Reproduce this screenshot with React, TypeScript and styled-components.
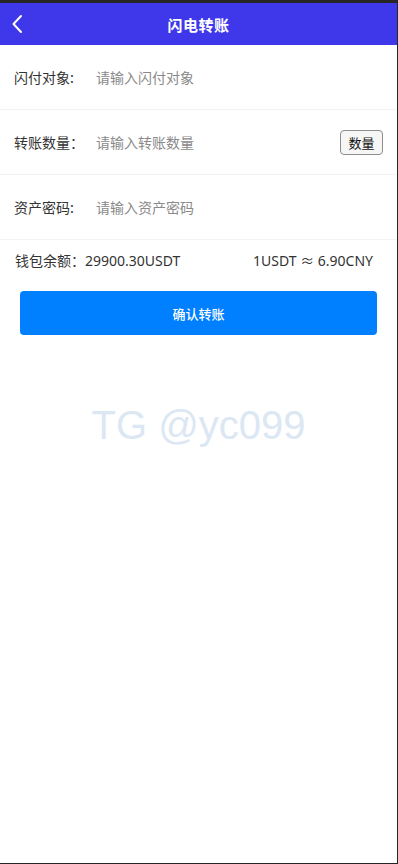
import styled, { createGlobalStyle } from 'styled-components'

const GlobalStyle = createGlobalStyle`
  html, body {
    margin: 0;
    padding: 0;
    background: #fff;
  }
  * {
    box-sizing: border-box;
  }
  body {
    font-family: "Noto Sans CJK SC", "Noto Sans", sans-serif;
  }
`

const Page = styled.div`
  height: 864px;
  border-top: 3px solid #262626;
  border-right: 1px solid #262626;
  border-bottom: 1px solid #262626;
  display: flex;
  flex-direction: column;
  background: #fff;
`

const Header = styled.header`
  height: 42px;
  background: #3e38ea;
  display: flex;
  align-items: center;
  justify-content: center;
  position: relative;
  color: #fff;
`

const BackButton = styled.div`
  position: absolute;
  left: 11px;
  top: 10px;
  width: 16px;
  height: 22px;
  display: flex;
  align-items: center;
`

const Title = styled.h1`
  margin: 0;
  font-size: 15px;
  font-weight: 700;
  letter-spacing: 0.5px;
`

const Form = styled.div`
  display: flex;
  flex-direction: column;
`

const Row = styled.div`
  height: 65px;
  display: flex;
  align-items: center;
  padding: 0 14px;
  border-bottom: 1px solid #f3f3f3;
`

const Label = styled.label`
  width: 82px;
  font-size: 14px;
  color: #333;
  flex-shrink: 0;
`

const Input = styled.input`
  flex: 1;
  border: none;
  outline: none;
  font-family: inherit;
  font-size: 14px;
  color: #333;
  padding: 0;
  background: transparent;

  &::placeholder {
    color: #8a8a8a;
  }
`

const SmallButton = styled.button`
  width: 43px;
  height: 25px;
  border: 1px solid #8e8e8e;
  border-radius: 4px;
  background: #f6f6f6;
  font-family: inherit;
  font-size: 13px;
  color: #111;
  padding: 0;
  flex-shrink: 0;
`

const BalanceLine = styled.div`
  display: flex;
  justify-content: space-between;
  align-items: center;
  padding: 0 24px 0 15px;
  height: 40px;
  font-family: "Noto Sans", "Noto Sans CJK SC", sans-serif;
  font-size: 14px;
  color: #333;
`

const Submit = styled.button`
  margin: 11px 20px 0 20px;
  height: 44px;
  border: none;
  border-radius: 4px;
  background: #0080ff;
  color: #fff;
  font-family: inherit;
  font-size: 13px;
  font-weight: 500;
`

const Watermark = styled.div`
  margin-top: 68px;
  text-align: center;
  font-family: "Liberation Sans", Arial, sans-serif;
  font-size: 40px;
  color: #dce7f4;
`

const rows = [
  { label: '闪付对象:', placeholder: '请输入闪付对象' },
  { label: '转账数量：', placeholder: '请输入转账数量', action: '数量' },
  { label: '资产密码:', placeholder: '请输入资产密码', type: 'password' }
]

export default function App() {
  return (
    <>
      <GlobalStyle />
      <Page>
        <Header>
          <BackButton>
            <svg width="12" height="20" viewBox="0 0 12 20">
              <path d="M10 2 L2.5 10 L10 18" fill="none" stroke="#fff" strokeWidth="2" strokeLinecap="round" strokeLinejoin="round" />
            </svg>
          </BackButton>
          <Title>闪电转账</Title>
        </Header>
        <Form>
          {rows.map((row, i) => (
            <Row key={i}>
              <Label>{row.label}</Label>
              <Input placeholder={row.placeholder} type={row.type || 'text'} />
              {row.action && <SmallButton>{row.action}</SmallButton>}
            </Row>
          ))}
        </Form>
        <BalanceLine>
          <span>钱包余额：29900.30USDT</span>
          <span>1USDT ≈ 6.90CNY</span>
        </BalanceLine>
        <Submit>确认转账</Submit>
        <Watermark>TG @yc099</Watermark>
      </Page>
    </>
  )
}
